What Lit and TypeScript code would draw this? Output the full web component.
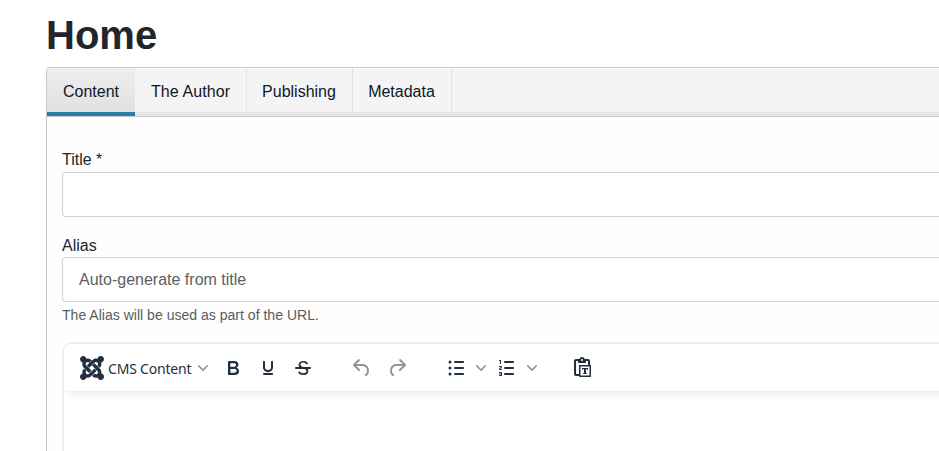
import { LitElement, html, svg, css } from "lit";
import { customElement, state } from "lit/decorators.js";
import { classMap } from "lit/directives/class-map.js";

const lines = "M11 5h8c.6 0 1 .4 1 1s-.4 1-1 1h-8a1 1 0 0 1 0-2Zm0 6h8c.6 0 1 .4 1 1s-.4 1-1 1h-8a1 1 0 0 1 0-2Zm0 6h8c.6 0 1 .4 1 1s-.4 1-1 1h-8a1 1 0 0 1 0-2Z";
const numLines = "M10 17h8c.6 0 1 .4 1 1s-.4 1-1 1h-8a1 1 0 0 1 0-2Zm0-6h8c.6 0 1 .4 1 1s-.4 1-1 1h-8a1 1 0 0 1 0-2Zm0-6h8c.6 0 1 .4 1 1s-.4 1-1 1h-8a1 1 0 1 1 0-2Z";

const icons = {
  bold: svg`<path fill-rule="evenodd" d="M7.8 19c-.3 0-.5 0-.6-.2l-.2-.5V5.7c0-.2 0-.4.2-.5l.6-.2h5c1.5 0 2.7.3 3.5 1 .7.6 1.1 1.4 1.1 2.5a3 3 0 0 1-.6 1.9c-.4.6-1 1-1.6 1.2.4.1.9.3 1.3.6s.8.7 1 1.2c.4.4.5 1 .5 1.6 0 1.3-.4 2.3-1.3 3-.8.7-2.1 1-3.8 1H7.8Zm5-8.3c.6 0 1.2-.1 1.6-.5.4-.3.6-.7.6-1.3 0-1.1-.8-1.7-2.3-1.7H9.3v3.5h3.4Zm.5 6c.7 0 1.3-.1 1.7-.4.4-.4.6-.9.6-1.5s-.2-1-.7-1.4c-.4-.3-1-.4-2-.4H9.4v3.8h4Z"/>`,
  underline: svg`<path d="M16 5c.6 0 1 .4 1 1v5.5a4 4 0 0 1-.4 1.8l-1 1.4a5.3 5.3 0 0 1-5.5 1 5 5 0 0 1-1.6-1c-.5-.4-.8-.9-1.1-1.4a4 4 0 0 1-.4-1.8V6c0-.6.4-1 1-1s1 .4 1 1v5.5c0 .3 0 .6.2 1l.6.7a3.3 3.3 0 0 0 2.2.8 3.4 3.4 0 0 0 2.2-.8c.3-.2.4-.5.6-.8l.2-.9V6c0-.6.4-1 1-1ZM8 17h8c.6 0 1 .4 1 1s-.4 1-1 1H8a1 1 0 0 1 0-2Z"/>`,
  strike: svg`<path d="M15.6 8.5c-.5-.7-1-1.1-1.3-1.3-.6-.4-1.3-.6-2-.6-2.7 0-2.8 1.7-2.8 2.1 0 1.6 1.8 2 3.2 2.3 4.4.9 4.6 2.8 4.6 3.9 0 1.4-.7 4.1-5 4.1A6.2 6.2 0 0 1 7 16.4l1.5-1.1c.4.6 1.6 2 3.7 2 1.6 0 2.5-.4 3-1.2.4-.8.3-2-.8-2.6-.7-.4-1.6-.7-2.9-1-1-.2-3.9-.8-3.9-3.6C7.6 6 10.3 5 12.4 5c2.9 0 4.2 1.6 4.7 2.4l-1.5 1.1Z"/><path d="M5 11h14a1 1 0 0 1 0 2H5a1 1 0 0 1 0-2Z"/>`,
  undo: svg`<path d="M6.4 8H12c3.7 0 6.2 2 6.8 5.1.6 2.7-.4 5.6-2.3 6.8a1 1 0 0 1-1-1.8c1.1-.6 1.8-2.7 1.4-4.6-.5-2.1-2.1-3.5-4.9-3.5H6.4l3.3 3.3a1 1 0 1 1-1.4 1.4l-5-5a1 1 0 0 1 0-1.4l5-5a1 1 0 0 1 1.4 1.4L6.4 8Z"/>`,
  redo: svg`<path transform="matrix(-1 0 0 1 24 0)" d="M6.4 8H12c3.7 0 6.2 2 6.8 5.1.6 2.7-.4 5.6-2.3 6.8a1 1 0 0 1-1-1.8c1.1-.6 1.8-2.7 1.4-4.6-.5-2.1-2.1-3.5-4.9-3.5H6.4l3.3 3.3a1 1 0 1 1-1.4 1.4l-5-5a1 1 0 0 1 0-1.4l5-5a1 1 0 0 1 1.4 1.4L6.4 8Z"/>`,
  bullets: svg`<path d=${lines}/><circle cx="6" cy="6" r="1.5"/><circle cx="6" cy="12" r="1.5"/><circle cx="6" cy="18" r="1.5"/>`,
  numbers: svg`<path d=${numLines}/><path d="M6 4v3.5c0 .3-.2.5-.5.5a.5.5 0 0 1-.5-.5V5h-.5a.5.5 0 0 1 0-1H6Zm-1 8.8.2.2h1.3c.3 0 .5.2.5.5s-.2.5-.5.5H4.9a1 1 0 0 1-.9-1V13c0-.4.3-.8.6-1l1.2-.4.2-.3a.2.2 0 0 0-.2-.2H4.5a.5.5 0 0 1-.5-.5c0-.3.2-.5.5-.5h1.6c.5 0 .9.4.9 1v.1c0 .4-.3.8-.6 1l-1.2.4-.2.3ZM7 17v2c0 .6-.4 1-1 1H4.5a.5.5 0 0 1 0-1h1.2c.2 0 .3-.1.3-.3 0-.2-.1-.3-.3-.3H4.4a.4.4 0 1 1 0-.8h1.3c.2 0 .3-.1.3-.3 0-.2-.1-.3-.3-.3H4.5a.5.5 0 1 1 0-1H6c.6 0 1 .4 1 1Z"/>`,
  pasteText: svg`<path fill-rule="evenodd" d="M18 9V5h-2v1c0 .6-.4 1-1 1H9a1 1 0 0 1-1-1V5H6v13h3V9h9ZM9 20H6a2 2 0 0 1-2-2V5c0-1.1.9-2 2-2h3.2A3 3 0 0 1 12 1a3 3 0 0 1 2.8 2H18a2 2 0 0 1 2 2v4h1v11c0 .6-.4 1-1 1H10a1 1 0 0 1-1-1Zm1.5-9.5v9h9v-9h-9ZM12 3a1 1 0 0 0-1 1c0 .5.4 1 1 1s1-.5 1-1-.4-1-1-1Z"/><path d="M12 12h6v2h-.5l-.5-1h-1v4h.8v1h-3.6v-1h.8v-4h-1l-.5 1H12v-2Z"/>`,
};

const joomla = "M.6 92.1C.6 58.8 27.4 32 60.4 32c30 0 54.5 21.9 59.2 50.2 32.6-7.6 67.1.6 96.5 30l-44.3 44.3c-20.5-20.5-42.6-16.3-55.4-3.5-14.3 14.3-14.3 37.9 0 52.2l99.5 99.5-44 44.3c-87.7-87.2-49.7-49.7-99.8-99.7-26.8-26.5-35-64.8-24.8-98.9C20.4 144.6.6 120.7.6 92.1zm129.5 116.4l44.3 44.3c10-10 89.7-89.7 99.7-99.8 14.3-14.3 37.6-14.3 51.9 0 12.8 12.8 17 35-3.5 55.4l44 44.3c31.2-31.2 38.5-67.6 28.9-101.2 29.2-4.1 51.9-29.2 51.9-59.5 0-33.2-26.8-60.1-59.8-60.1-30.3 0-55.4 22.5-59.5 51.6-33.8-9.9-71.7-1.5-98.3 25.1-18.3 19.1-71.1 71.5-99.6 99.9zm266.3 152.2c8.2-32.7-.9-68.5-26.3-93.9-11.8-12.2 5 4.7-99.5-99.7l-44.3 44.3 99.7 99.7c14.3 14.3 14.3 37.6 0 51.9-12.8 12.8-35 17-55.4-3.5l-44 44.3c27.6 30.2 68 38.8 102.7 28 5.5 27.4 29.7 48.1 58.9 48.1 33 0 59.8-26.8 59.8-60.1 0-30.2-22.5-55-51.6-59.1zm-84.3-53.1l-44-44.3c-87 86.4-50.4 50.4-99.7 99.8-14.3 14.3-37.6 14.3-51.9 0-13.1-13.4-16.9-35.3 3.2-55.4l-44-44.3c-30.2 30.2-38 65.2-29.5 98.3-26.7 6-46.2 29.9-46.2 58.2C0 453.2 26.8 480 59.8 480c28.6 0 52.5-19.8 58.6-46.7 32.7 8.2 68.5-.6 94.2-26 32.1-32 12.2-12.4 99.5-99.7z";

@customElement("editor-toolbar")
export class EditorToolbar extends LitElement {
  static styles = css`
    :host { display: block; margin-right: -20px; }
    .bar {
      display: flex; align-items: center; height: 47px; padding-left: 16px; box-sizing: border-box;
      background: #fff; box-shadow: 0 2px 2px -2px rgba(34, 47, 62, .1), 0 8px 8px -4px rgba(34, 47, 62, .07);
      border-radius: 8px 0 0 0; color: #222f3e;
    }
    svg { display: block; fill: currentColor; flex: none; }
    .group { display: flex; align-items: center; }
    .menu { width: 128px; height: 24px; }
    .label { font: 14px/24px "Noto Sans", "Open Sans", sans-serif; letter-spacing: -.2px; width: 90px; margin-left: 4px; padding-top: 2px; white-space: nowrap; }
    .chevron { opacity: .5; }
    .format { gap: 11px; margin-left: 13px; }
    .history { gap: 11px; margin-left: 35px; opacity: .5; }
    .lists { margin-left: 35px; }
    .lists .chevron { margin: 0 9px 0 8px; }
    .paste { margin-left: 24px; }
  `;

  private icon(name: keyof typeof icons) {
    return html`<svg width="24" height="24" viewBox="0 0 24 24">${icons[name]}</svg>`;
  }

  private chevron() {
    return html`<svg class="chevron" width="10" height="10" viewBox="0 0 10 10"><path d="M8.7 2.2c.3-.3.8-.3 1 0 .4.4.4.9 0 1.2L5.7 7.8c-.3.3-.9.3-1.2 0L.2 3.4a.8.8 0 0 1 0-1.2c.3-.3.8-.3 1.1 0L5 6l3.7-3.8Z"/></svg>`;
  }

  render() {
    return html`<div class="bar">
      <div class="group menu">
        <svg width="24" height="24" viewBox="0 32 448 448"><path d=${joomla} /></svg>
        <span class="label">CMS Content</span>${this.chevron()}
      </div>
      <div class="group format">${this.icon("bold")}${this.icon("underline")}${this.icon("strike")}</div>
      <div class="group history">${this.icon("undo")}${this.icon("redo")}</div>
      <div class="group lists">${this.icon("bullets")}${this.chevron()}${this.icon("numbers")}${this.chevron()}</div>
      <div class="group paste">${this.icon("pasteText")}</div>
    </div>`;
  }
}

@customElement("app-root")
export class AppRoot extends LitElement {
  static styles = css`
    :host {
      display: block; height: 451px; overflow: hidden; background: #fff; color: #22262a;
      font: 16px/24px "Liberation Sans", Arial, sans-serif;
    }
    .page { padding: 11px 0 0 46px; }
    h1 { margin: 0 0 8px; font-size: 40px; line-height: 48px; font-weight: 700; }
    .panel { border: 1px solid #c6c8ca; border-right: 0; border-radius: 4px 0 0 0; height: 420px; background: #fefefe; }
    .tabs {
      display: flex; height: 48px; background: #f4f4f4; border-bottom: 1px solid #c6c8ca;
      border-radius: 3px 0 0 0; box-shadow: inset 0 1px #fff, inset 0 -4px #e6e6e6; overflow: hidden;
    }
    .tab {
      font: inherit; color: #0f1729; background: none; border: 0; margin: 0; box-sizing: border-box;
      padding: 0 16px 0 15px; border-right: 1px solid #e4e4e4; height: 48px; white-space: nowrap;
    }
    .tab:nth-child(1) { padding-left: 16px; width: 88px; }
    .tab:nth-child(2) { padding-left: 16px; width: 112px; letter-spacing: .08px; }
    .tab:nth-child(3) { width: 106px; }
    .tab:nth-child(4) { width: 99px; }
    .tab.active {
      background: linear-gradient(#eeeeee, #dfdfdf); border-right: 0; box-shadow: inset 0 -4px #2a7da5;
    }
    .form { padding: 31px 0 0 15px; }
    label { display: block; height: 24px; }
    .input {
      display: block; box-sizing: border-box; width: 100%; height: 45px; padding: 0 16px; font: inherit;
      background: #fff; border: 1px solid #ced4da; border-right: 0; border-radius: 4px 0 0 4px; outline: 0;
    }
    .input::placeholder { color: #5c6063; opacity: 1; }
    .title { margin-bottom: 17px; }
    .title + label { height: 23px; }
    .help { font-size: 14px; line-height: 21px; color: #595c5f; margin: 3px 0 16px; letter-spacing: .02px; }
    .editor { border: 2px solid #eee; border-right: 0; border-radius: 10px 0 0 0; height: 150px; background: #fff; }
  `;

  @state() private active = "Content";

  render() {
    return html`<main class="page">
      <h1>Home</h1>
      <section class="panel">
        <nav class="tabs">
          ${["Content", "The Author", "Publishing", "Metadata"].map(
            (name) => html`<button class=${classMap({ tab: true, active: name === this.active })} @click=${() => (this.active = name)}>${name}</button>`
          )}
        </nav>
        <div class="form">
          <label for="title">Title *</label>
          <input id="title" class="input title" />
          <label for="alias">Alias</label>
          <input id="alias" class="input" placeholder="Auto-generate from title" />
          <p class="help">The Alias will be used as part of the URL.</p>
          <div class="editor"><editor-toolbar></editor-toolbar></div>
        </div>
      </section>
    </main>`;
  }
}
